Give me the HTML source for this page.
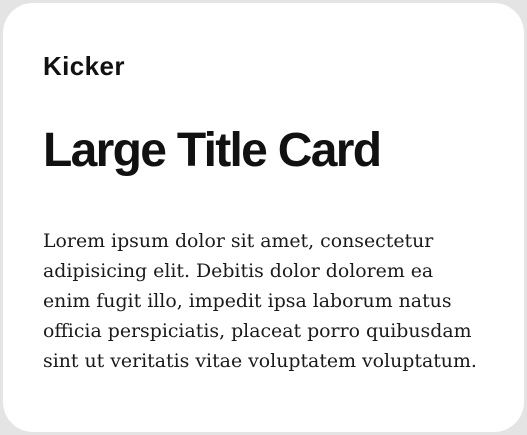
<!DOCTYPE html>
<html><head><style>
html,body{margin:0;padding:0;width:527px;height:435px;background:#e4e4e4;overflow:hidden}
.card{position:absolute;left:3px;top:3px;width:521px;height:429px;background:#fff;border-radius:30px}
.t{position:absolute;left:43px;white-space:nowrap;color:#111;margin:0}
.k{font:bold 26px/1 "Liberation Sans",sans-serif;top:53px;letter-spacing:0.4px}
.h{font:bold 48px/1 "Liberation Sans",sans-serif;top:127px;letter-spacing:-1.7px}
.p{font:18.9px/30px "DejaVu Serif",serif;top:226px;color:#1a1a1a}
</style></head><body>
<div class="card"></div>
<div class="t k">Kicker</div>
<div class="t h">Large Title Card</div>
<div class="t p">Lorem ipsum dolor sit amet, consectetur<br>adipisicing elit. Debitis dolor dolorem ea<br>enim fugit illo, impedit ipsa laborum natus<br>officia perspiciatis, placeat porro quibusdam<br>sint ut veritatis vitae voluptatem voluptatum.</div>
</body></html>
